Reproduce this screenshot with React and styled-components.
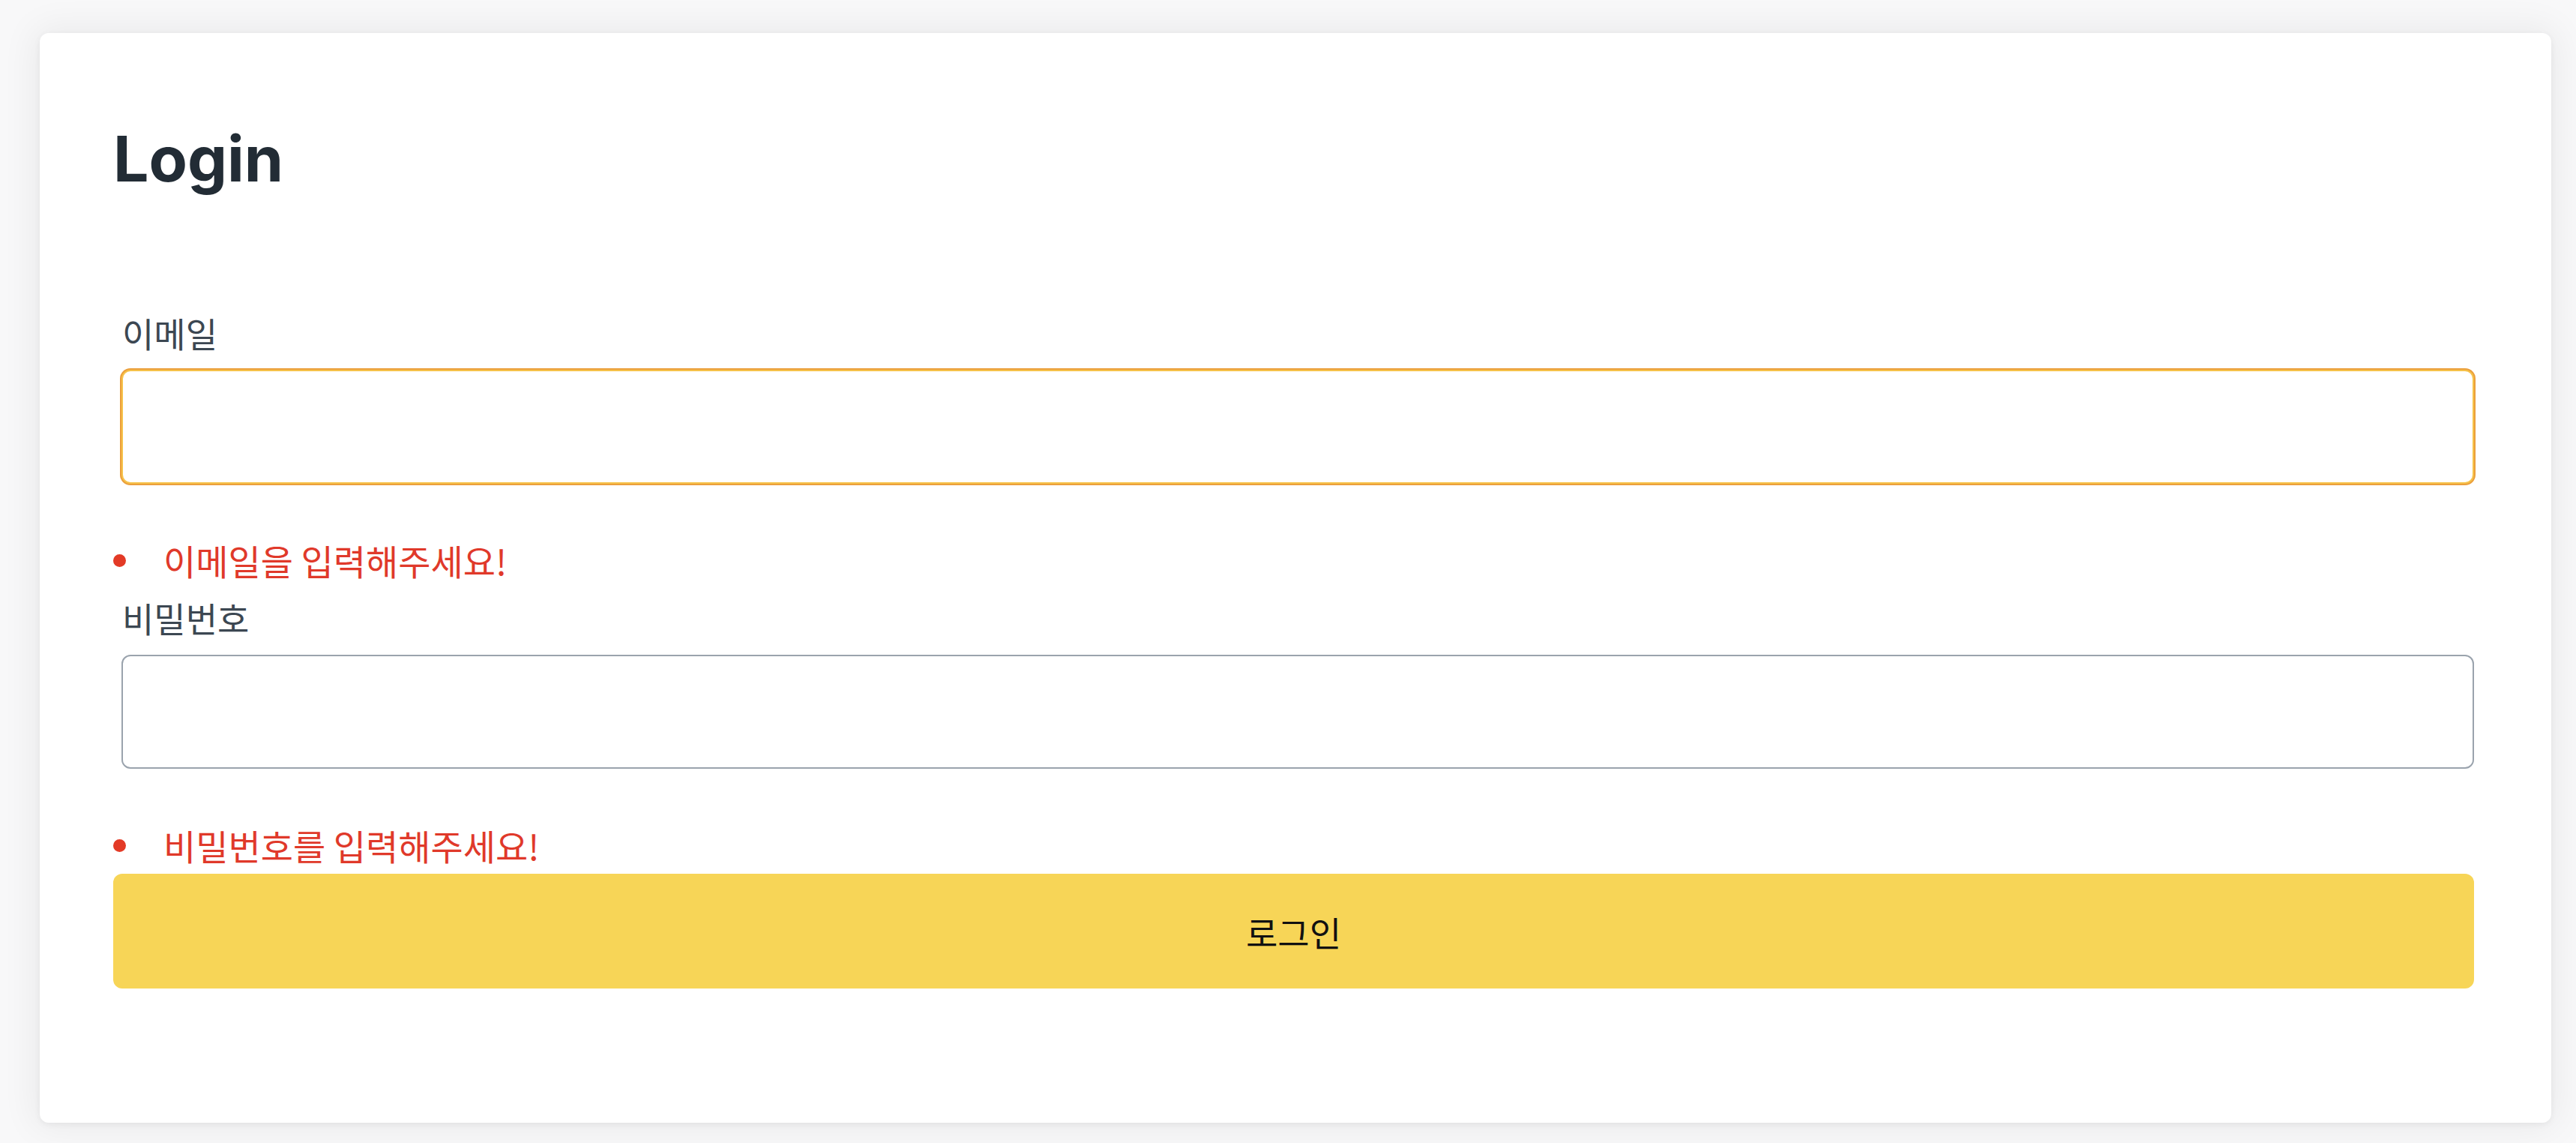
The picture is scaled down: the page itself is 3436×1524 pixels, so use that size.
import React, { useState } from 'react'
import styled, { createGlobalStyle } from 'styled-components'

const GlobalStyle = createGlobalStyle`
html, body {
  margin: 0;
  padding: 0;
  background: #f8f8f9;
}
* {
  box-sizing: border-box;
}
`

const Page = styled.div`
min-height: 1524px;
padding: 44px 33px 26px 53px;
font-family: Inter, "Noto Sans CJK KR", sans-serif;
`

const Card = styled.div`
background: #ffffff;
border-radius: 12px;
box-shadow: 0 2px 8px rgba(0, 0, 0, 0.06), 0 0 48px 8px rgba(0, 0, 0, 0.06);
padding: 110px 103px 179px 98px;
`

const Title = styled.h1`
margin: 0;
font-family: Inter, sans-serif;
font-size: 84px;
line-height: 116px;
font-weight: 700;
color: #222c35;
`

const Form = styled.form`
display: flex;
flex-direction: column;
margin-top: 143px;
`

const Field = styled.div`
display: flex;
flex-direction: column;
padding-left: ${p => p.$inset}px;
margin-top: ${p => p.$top || 0}px;
`

const Label = styled.label`
font-family: "Noto Sans CJK KR", sans-serif;
font-size: 46px;
line-height: 60px;
color: #3c4752;
padding-left: 1px;
`

const Input = styled.input`
margin-top: 20px;
height: 152px;
width: 100%;
border: 2px solid ${p => (p.$focused ? '#f6c24a' : '#9aa3ad')};
border-radius: 12px;
box-shadow: ${p => (p.$focused ? '0 0 0 2px #eb9f3c' : 'none')};
outline: none;
background: #ffffff;
padding: 0 30px;
font-size: 46px;
font-family: "Noto Sans CJK KR", sans-serif;
`

const ErrorList = styled.ul`
list-style: none;
margin: 72px 0 0 0;
padding: 0;
`

const ErrorItem = styled.li`
display: flex;
align-items: center;
gap: 50px;
font-family: "Noto Sans CJK KR", sans-serif;
font-size: 47px;
line-height: 60px;
color: #e0392a;

&::before {
  content: '';
  width: 17px;
  height: 17px;
  border-radius: 50%;
  background: #e33a26;
  flex: none;
}
`

const SubmitButton = styled.button`
margin-top: 8px;
height: 153px;
width: 100%;
border: none;
border-radius: 12px;
background: #f7d557;
color: #111111;
font-family: "Noto Sans CJK KR", sans-serif;
font-size: 46px;
cursor: pointer;
`

const App = () => {
    const [email, setEmail] = useState('')
    const [password, setPassword] = useState('')

    return (
        <>
            <GlobalStyle/>
            <Page>
                <Card>
                    <Title>Login</Title>
                    <Form onSubmit={(e) => e.preventDefault()}>
                        <Field $inset={11}>
                            <Label htmlFor="email">이메일</Label>
                            <Input id="email" type="email" $focused value={email} onChange={(e) => setEmail(e.target.value)}/>
                        </Field>
                        <ErrorList>
                            <ErrorItem>이메일을 입력해주세요!</ErrorItem>
                        </ErrorList>
                        <Field $inset={11} $top={16}>
                            <Label htmlFor="password">비밀번호</Label>
                            <Input id="password" type="password" value={password} onChange={(e) => setPassword(e.target.value)}/>
                        </Field>
                        <ErrorList>
                            <ErrorItem>비밀번호를 입력해주세요!</ErrorItem>
                        </ErrorList>
                        <SubmitButton type="submit">로그인</SubmitButton>
                    </Form>
                </Card>
            </Page>
        </>
    )
}

export default App
